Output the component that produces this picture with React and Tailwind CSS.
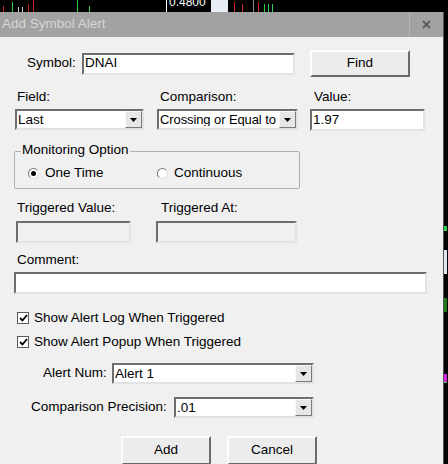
import { useState } from 'react';

const sunken =
  'border-2 border-t-[#6e6e6e] border-l-[#6e6e6e] border-r-[#e3e3e3] border-b-[#e3e3e3]';
const raised =
  'border-2 border-t-[#fdfdfd] border-l-[#fdfdfd] border-r-[#6a6a6a] border-b-[#6a6a6a]';

function Arrow() {
  return (
    <div className={`w-[17px] h-[17px] bg-[#e6e6e6] flex items-center justify-center shrink-0 border border-t-[#fafafa] border-l-[#fafafa] border-r-[#7a7a7a] border-b-[#7a7a7a]`}>
      <svg width="7" height="4" viewBox="0 0 7 4">
        <path d="M0 0h7L3.5 4z" fill="#000" />
      </svg>
    </div>
  );
}

function Select({ value, className, textClass = '' }) {
  return (
    <div className={`${sunken} bg-white h-[21px] flex items-center pl-[1px] ${className}`}>
      <span className={`flex-1 whitespace-nowrap overflow-hidden leading-none ${textClass}`}>{value}</span>
      <Arrow />
    </div>
  );
}

function Input({ value = '', className, disabled }) {
  return (
    <div
      className={`${sunken} ${disabled ? 'bg-[#f0f0f0]' : 'bg-white'} h-[22px] flex items-center pl-[1px] ${className}`}
    >
      {value}
    </div>
  );
}

function Button({ children, className }) {
  return (
    <div className={`${raised} bg-[#ececec] flex items-center justify-center ${className}`}>
      {children}
    </div>
  );
}

function Check({ label }) {
  return (
    <div className="flex items-center h-[16px]">
      <div className="w-[12px] h-[12px] ml-[17px] border border-[#5a5a5a] bg-white flex items-center justify-center">
        <svg width="9" height="8" viewBox="0 0 9 8">
          <path d="M1 4l2.5 2.5L8 1" stroke="#000" strokeWidth="1.8" fill="none" />
        </svg>
      </div>
      <span className="ml-[5px]">{label}</span>
    </div>
  );
}

function Radio({ checked, label, className }) {
  return (
    <div className={`flex items-center ${className}`}>
      <div className="w-[11px] h-[11px] rounded-full bg-white border border-t-[#7a7a7a] border-l-[#7a7a7a] border-r-[#dcdcdc] border-b-[#dcdcdc] flex items-center justify-center">
        {checked && <div className="w-[5px] h-[5px] rounded-full bg-black" />}
      </div>
      <span className="ml-[6px]">{label}</span>
    </div>
  );
}

const ticks = [
  [3, 6, '#d02020'], [12, 10, '#2ecc40'], [18, 5, '#d0d0d0'], [22, 5, '#d0d0d0'], [28, 8, '#d02020'],
  [33, 12, '#d02020'], [77, 12, '#2ecc40'], [89, 6, '#2ecc40'], [225, 11, '#2ecc40'],
  [234, 10, '#d02020'], [242, 8, '#d02020'], [253, 12, '#888'], [258, 10, '#d02020'],
  [264, 8, '#2ecc40'], [268, 8, '#2ecc40'], [272, 8, '#2ecc40'],
];

export default function App() {
  const [oneTime] = useState(true);

  return (
    <div className="w-[448px] h-[464px] bg-black overflow-hidden font-['Liberation_Sans',Arial,sans-serif] text-[13.5px] text-black">
      {/* chart strip behind the dialog */}
      <div className="relative h-[12px]">
        {ticks.map(([x, h, c], i) => (
          <div key={i} className="absolute bottom-0 w-px" style={{ left: x, height: h, background: c }} />
        ))}
        <div className="absolute left-[166px] bottom-0 w-px h-[12px] bg-white" />
        <span className="absolute left-[169px] -top-[4px] text-[12px] text-white leading-none">0.4800</span>
        <div className="absolute left-[211px] top-0 w-[17px] h-[12px] bg-[#e8ecf5]" />
      </div>

      <div className="flex">
        <div className="w-[444px] h-[452px] bg-[#f0f0f0] border-r border-[#555]">
          {/* title bar */}
          <div className="h-[25px] bg-[#a2a2a2] flex items-stretch">
            <div className="flex-1 flex items-center pl-[2px] text-[13.5px] text-[#d6d6d6]">Add Symbol Alert</div>
            <div className="w-[34px] border-l border-[#b4b4b4] flex items-center justify-center">
              <svg width="9" height="9" viewBox="0 0 9 9">
                <path d="M1 1l7 7M8 1L1 8" stroke="#5c5c5c" strokeWidth="1.8" />
              </svg>
            </div>
          </div>

          {/* symbol row */}
          <div className="flex items-center mt-[13px] h-[27px]">
            <span className="ml-[27px] w-[55px]">Symbol:</span>
            <Input value="DNAI" className="w-[213px] h-[21px]" />
            <Button className="ml-[15px] w-[100px] h-[27px]">Find</Button>
          </div>

          {/* field / comparison / value */}
          <div className="flex mt-[13px] h-[15px] items-center">
            <span className="ml-[17px] w-[143px]">Field:</span>
            <span className="w-[154px]">Comparison:</span>
            <span>Value:</span>
          </div>
          <div className="flex mt-[4px]">
            <Select value="Last" className="ml-[15px] w-[129px]" />
            <Select value="Crossing or Equal to" className="ml-[13px] w-[141px]" textClass="text-[13px] tracking-[-0.1px]" />
            <Input value="1.97" className="ml-[12px] w-[115px] h-[21px]" />
          </div>

          {/* monitoring option */}
          <div className="relative ml-[14px] mt-[20px] w-[286px] h-[38px] border border-[#b0b0b0] rounded-[2px]">
            <span className="absolute left-[6px] -top-[9px] px-[1px] bg-[#f0f0f0] leading-none">Monitoring Option</span>
            <div className="flex items-center mt-[11px]">
              <Radio checked={oneTime} label="One Time" className="ml-[13px] w-[129px]" />
              <Radio checked={!oneTime} label="Continuous" />
            </div>
          </div>

          {/* triggered */}
          <div className="flex mt-[12px] h-[15px] items-center">
            <span className="ml-[17px] w-[144px]">Triggered Value:</span>
            <span>Triggered At:</span>
          </div>
          <div className="flex mt-[5px]">
            <Input disabled className="ml-[16px] w-[115px]" />
            <Input disabled className="ml-[25px] w-[141px]" />
          </div>

          {/* comment */}
          <div className="mt-[10px] ml-[17px] h-[15px] flex items-center">Comment:</div>
          <Input className="ml-[14px] mt-[4px] w-[413px]" />

          <div className="mt-[16px] flex flex-col gap-[8px]">
            <Check label="Show Alert Log When Triggered" />
            <Check label="Show Alert Popup When Triggered" />
          </div>

          {/* alert num / precision */}
          <div className="flex items-center mt-[13px]">
            <span className="ml-[43px] w-[69px]">Alert Num:</span>
            <Select value="Alert 1" className="w-[202px]" />
          </div>
          <div className="flex items-center mt-[13px]">
            <span className="ml-[31px] w-[143px]">Comparison Precision:</span>
            <Select value=".01" className="w-[140px]" />
          </div>

          <div className="flex mt-[18px]">
            <Button className="ml-[121px] w-[90px] h-[29px]">Add</Button>
            <Button className="ml-[16px] w-[90px] h-[29px]">Cancel</Button>
          </div>
        </div>

        {/* chart edge on the right */}
        <div className="relative w-[3px] h-[452px]">
          <div className="absolute top-[214px] w-[3px] h-[5px] bg-[#2ecc40]" />
          <div className="absolute top-[238px] w-[3px] h-[24px] bg-[#dde4f2]" />
          <div className="absolute top-[286px] w-[3px] h-[14px] bg-[#1a7a1a]" />
          <div className="absolute top-[362px] w-[3px] h-[8px] bg-[#e020e0]" />
          <div className="absolute top-[370px] w-[3px] h-px bg-[#2ecc40]" />
        </div>
      </div>
    </div>
  );
}
